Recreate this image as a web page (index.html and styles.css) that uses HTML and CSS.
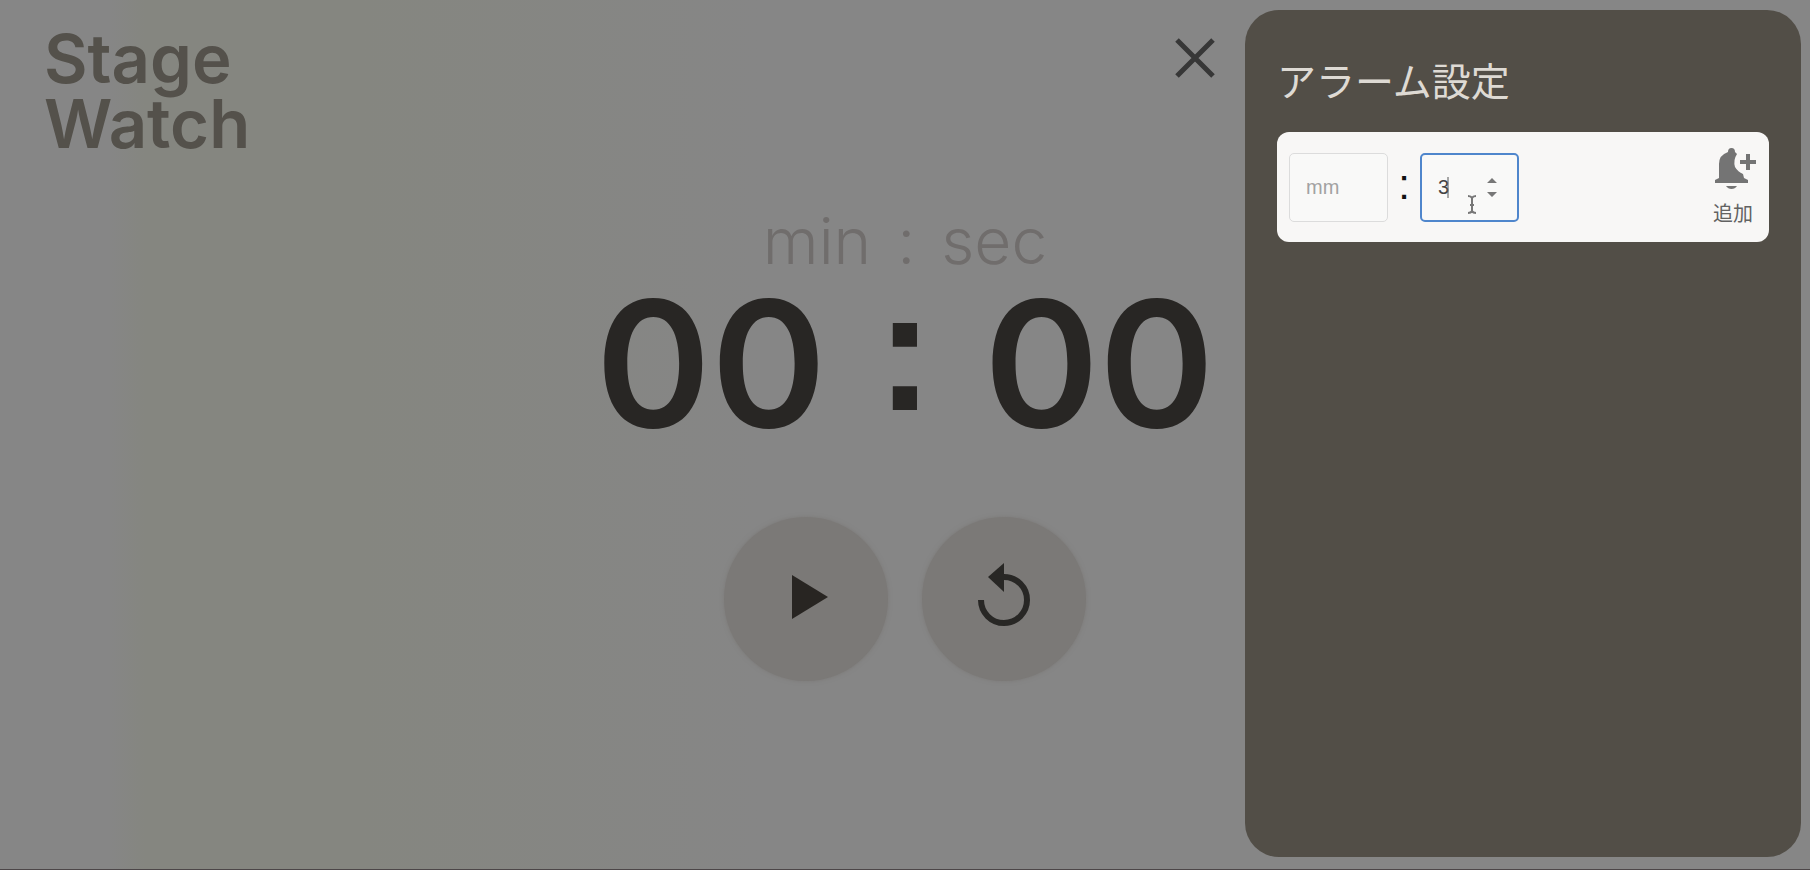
FILE: index.html
```html
<!DOCTYPE html>
<html lang="ja">
<head>
<meta charset="utf-8">
<meta name="viewport" content="width=device-width, initial-scale=1">
<title>Stage Watch</title>
<link rel="stylesheet" href="styles.css">
</head>
<body>
<div class="app">
  <header class="header">
    <h1 class="brand">Stage<br>Watch</h1>
  </header>
  <main class="timer">
    <p class="units"><span>min</span><span>:</span><span>sec</span></p>
    <div class="clock" role="timer"><span>00</span><span class="clock-colon">:</span><span>00</span></div>
    <div class="controls">
      <button class="round" type="button" aria-label="Start">
        <svg width="60" height="60" viewBox="0 0 60 60"><path d="M16 6 L52 28 L16 50 Z" fill="#282522"/></svg>
      </button>
      <button class="round" type="button" aria-label="Reset">
        <svg width="60" height="60" viewBox="0 0 60 60"><path d="M7 31 A23 23 0 1 0 30 8" fill="none" stroke="#282725" stroke-width="6"/><path d="M30 -6 L30 23 L14 8 Z" fill="#282725"/></svg>
      </button>
    </div>
  </main>

  <div class="drawer">
    <button class="close" type="button" aria-label="Close">
      <svg width="44" height="44" viewBox="0 0 44 44"><path d="M4 4 L40 40 M40 4 L4 40" stroke="#373737" stroke-width="5"/></svg>
    </button>
    <aside class="panel">
      <h2 class="panel-title">アラーム設定</h2>
      <form class="alarm">
        <div class="field">
          <input class="number" type="number" placeholder="mm" aria-label="mm" min="0">
        </div>
        <span class="separator">:</span>
        <div class="field">
          <input class="number number-active" type="number" value="3" aria-label="ss" min="0" max="59">
          <svg class="marks" width="60" height="40" viewBox="0 0 60 40">
            <path d="M2 8 V29" stroke="#555" stroke-width="1"/>
            <path d="M41 14 L46 9 L51 14 Z M41 23 L46 28 L51 23 Z" fill="#777"/>
            <path d="M22 27 Q25 27 26 29 Q27 27 30 27 M26 29 V42 M22 44 Q25 44 26 42 Q27 44 30 44 M24 36 H28" fill="none" stroke="#777" stroke-width="2"/>
          </svg>
        </div>
        <button class="add" type="button">
          <svg width="44" height="44" viewBox="0 0 44 44" fill="#747474">
            <path d="M15 5 Q15 1 18.500 1 Q22 1 22 5 L24 7 Q20 13 22 20 Q25 25 30 27 L31 31 L35 33 V36 H2 V33 L6 31 V17 Q6 8 15 5 Z"/>
            <path d="M13 39 H24 Q22 42 18.500 42 Q15 42 13 39 Z"/>
            <path d="M33 7 H37 V13 H43 V17 H37 V23 H33 V17 H27 V13 H33 Z"/>
          </svg>
          <span>追加</span>
        </button>
      </form>
    </aside>
  </div>
</div>
</body>
</html>
```
FILE: styles.css
```css
* { box-sizing: border-box; }

body {
  margin: 0;
  font-family: Inter, "Noto Sans CJK JP", sans-serif;
  color: #282624;
}

button {
  padding: 0;
  border: 0;
  background: none;
  font: inherit;
  color: inherit;
}

svg { display: block; overflow: visible; }

.app {
  position: relative;
  display: flex;
  flex-direction: column;
  min-height: 100vh;
  overflow: hidden;
  border-bottom: 1px solid #4c4648;
  background: linear-gradient(90deg, #868686 0, #868686 6%, #858680 8%, #858680 20%, #868686 42%);
}

.header { padding: 26px 44px 0; }

.brand {
  margin: 0;
  color: #54514b;
  font-size: 67px;
  font-weight: 600;
  line-height: 65px;
}

.timer {
  display: flex;
  flex-direction: column;
  align-items: center;
  padding-top: 53px;
}

.units {
  display: flex;
  gap: 26px;
  margin: 0;
  color: #706d6c;
  font-size: 64px;
  font-weight: 300;
  line-height: 64px;
}

.clock {
  display: flex;
  justify-content: center;
  gap: 50px;
  margin-top: 10px;
  font-size: 175px;
  font-weight: 600;
  line-height: 160px;
}

.clock-colon {
  font-family: "Liberation Sans", sans-serif;
  font-size: 172px;
  font-weight: 700;
  line-height: 134px;
}

.controls {
  display: flex;
  gap: 34px;
  margin-top: 74px;
}

.round {
  display: grid;
  place-items: center;
  width: 164px;
  height: 164px;
  border-radius: 50%;
  background: #7b7977;
  box-shadow: 0 0 4px #7b7977;
}

.drawer {
  position: absolute;
  top: 10px;
  right: 9px;
  bottom: 12px;
  display: flex;
  align-items: flex-start;
  gap: 28px;
}

.close { padding-top: 26px; }

.panel {
  align-self: stretch;
  width: 556px;
  padding: 41px 32px 32px;
  border-radius: 34px;
  background: #524e47;
}

.panel-title {
  margin: 0 0 25px;
  color: #dedad4;
  font-family: "Noto Sans CJK JP", sans-serif;
  font-size: 39px;
  font-weight: 400;
  line-height: 56px;
}

.alarm {
  display: flex;
  align-items: center;
  height: 110px;
  padding: 0 12px;
  border-radius: 12px;
  background: #f8f7f6;
}

.field { position: relative; }

.number {
  display: block;
  width: 99px;
  height: 69px;
  padding: 0 16px;
  border: 1px solid #dcdcdc;
  border-radius: 5px;
  outline: 0;
  background: #f9f9f8;
  color: #444;
  font: 20px "Liberation Sans", sans-serif;
  appearance: textfield;
}

.number::placeholder { color: #a2a2a2; }

.number::-webkit-inner-spin-button { display: none; }

.number-active { border: 2px solid #4f86cc; }

.marks {
  position: absolute;
  top: 16px;
  left: 26px;
}

.separator {
  width: 32px;
  padding-bottom: 4px;
  color: #111;
  font-family: "Liberation Sans", sans-serif;
  font-size: 42px;
  font-weight: 400;
  line-height: 46px;
  text-align: center;
}

.add {
  display: flex;
  flex-direction: column;
  align-items: flex-start;
  gap: 8px;
  margin-left: auto;
  color: #626262;
  font-family: "Noto Sans CJK JP", sans-serif;
  font-size: 20px;
  line-height: 28px;
}
```
